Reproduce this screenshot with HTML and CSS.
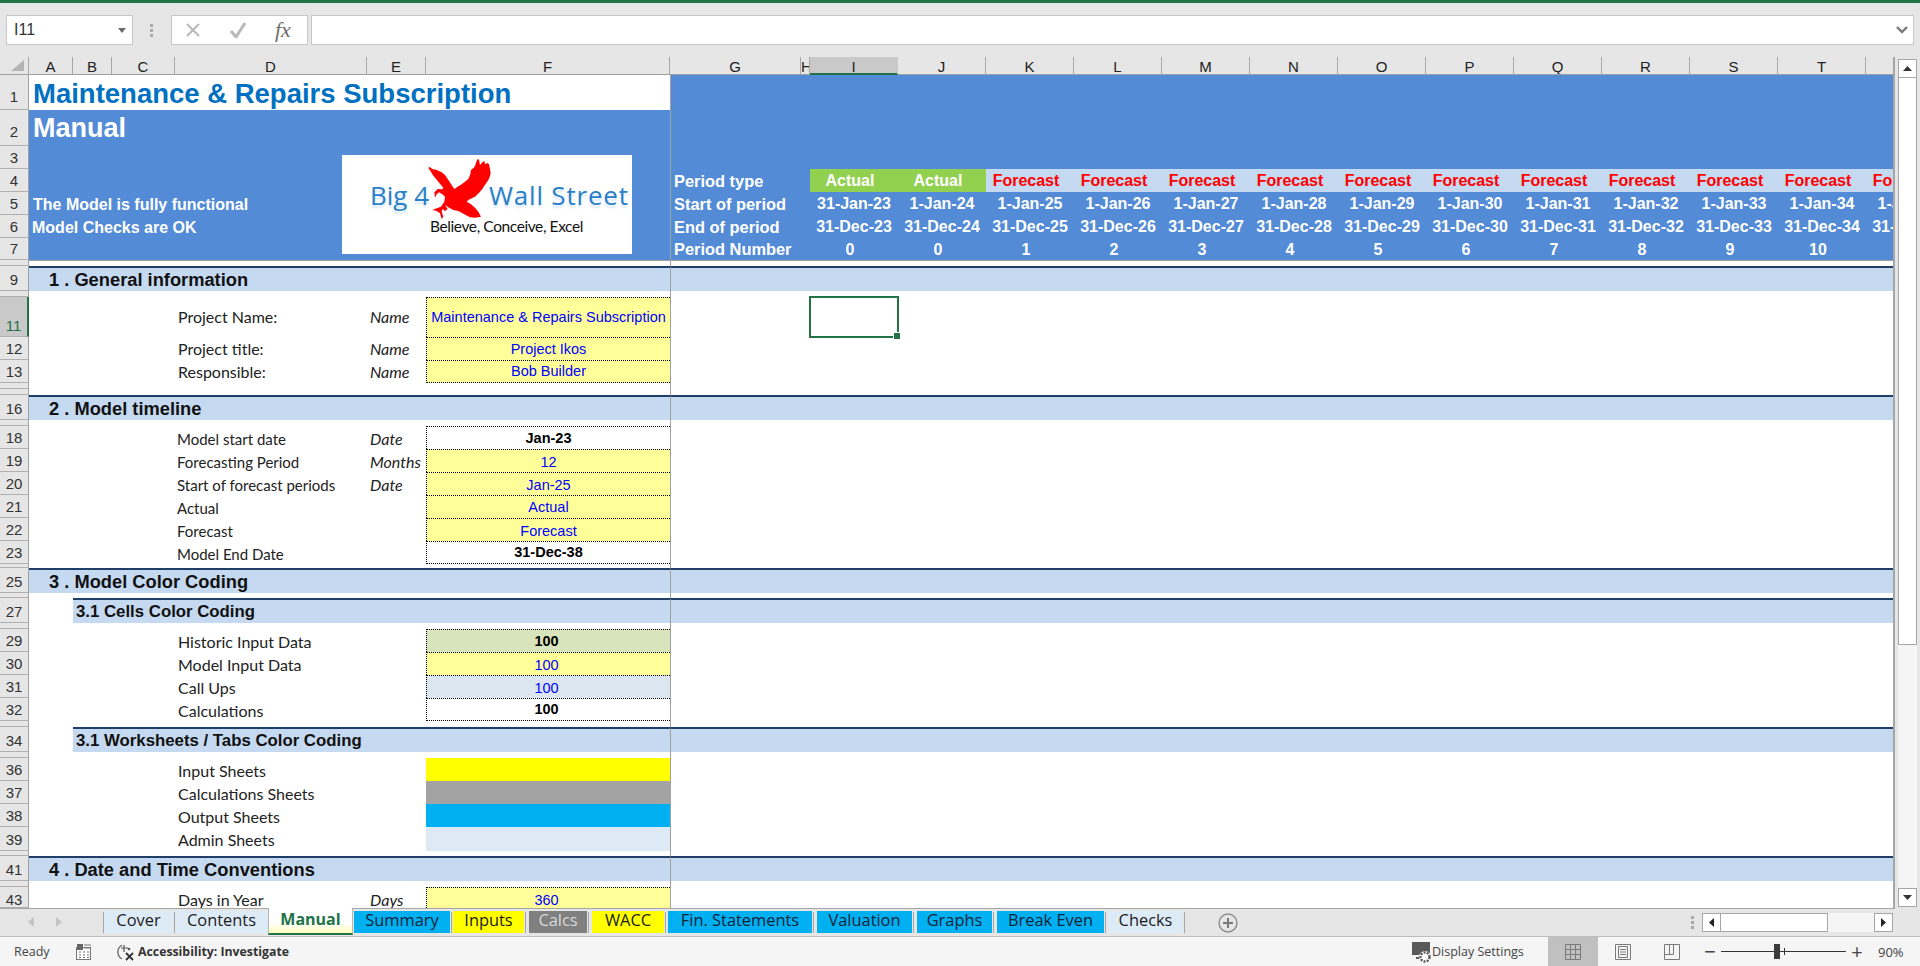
FILE: index.html
```html
<!DOCTYPE html>
<html lang="en">
<head>
<meta charset="utf-8">
<title>Manual</title>
<link rel="stylesheet" href="styles.css">
</head>
<body>
<div class="topline"></div>
<div class="fbar">
  <div class="namebox"><span>I11</span><svg class="caret" width="8" height="5" viewBox="0 0 8 5"><path d="M0 0h8L4 5z" fill="#6a6a6a"/></svg></div>
  <div class="grip"><i></i><i></i><i></i></div>
  <div class="fnbox">
    <svg width="16" height="16" viewBox="0 0 16 16"><path d="M2 2l12 12M14 2L2 14" stroke="#b9b9b9" stroke-width="2" fill="none"/></svg>
    <svg width="18" height="16" viewBox="0 0 18 16"><path d="M2 9l5 6L16 1" stroke="#b9b9b9" stroke-width="3" fill="none"/></svg>
    <span class="fx">fx</span>
  </div>
  <div class="finput"><svg width="12" height="8" viewBox="0 0 12 8"><path d="M1 1l5 5 5-5" stroke="#7a7a7a" stroke-width="2.4" fill="none"/></svg></div>
</div>
<div class="sheet">
  <div class="clip">
    <table class="grid">
      <colgroup>
        <col class="c-rh"><col class="c-a"><col class="c-b"><col class="c-c"><col class="c-d"><col class="c-e"><col class="c-f"><col class="c-g"><col class="c-h">
        <col class="c-p"><col class="c-p"><col class="c-p"><col class="c-p"><col class="c-p"><col class="c-p"><col class="c-p"><col class="c-p"><col class="c-p"><col class="c-p"><col class="c-p"><col class="c-p"><col class="c-p">
      </colgroup>
      <tr class="head">
        <th class="corner"><div class="ch"><svg width="13" height="11" viewBox="0 0 13 11"><path d="M13 0v11H0z" fill="#b4b4b4"/></svg></div></th>
        <th><div class="ch">A</div></th><th><div class="ch">B</div></th><th><div class="ch">C</div></th><th><div class="ch">D</div></th><th><div class="ch">E</div></th><th><div class="ch">F</div></th><th><div class="ch">G</div></th><th><div class="ch chh">H</div></th>
        <th><div class="ch chsel">I</div></th><th><div class="ch">J</div></th><th><div class="ch">K</div></th><th><div class="ch">L</div></th><th><div class="ch">M</div></th><th><div class="ch">N</div></th><th><div class="ch">O</div></th><th><div class="ch">P</div></th><th><div class="ch">Q</div></th><th><div class="ch">R</div></th><th><div class="ch">S</div></th><th><div class="ch">T</div></th><th><div class="ch">U</div></th>
      </tr>
      <tr><th><div class="rh h35">1</div></th><td colspan="6" class="title">Maintenance &amp; Repairs Subscription</td><td colspan="15" class="blue pane"></td></tr>
      <tr><th><div class="rh h36">2</div></th><td colspan="6" class="blue sub">Manual</td><td colspan="15" class="blue pane"></td></tr>
      <tr><th><div class="rh h23">3</div></th><td colspan="6" class="blue"></td><td colspan="15" class="blue pane"></td></tr>
      <tr class="per"><th><div class="rh h23">4</div></th><td colspan="6" class="blue"></td>
        <td colspan="2" class="blue pane plabel">Period type</td>
        <td class="actual sh">Actual</td><td class="actual sh">Actual</td>
        <td class="fc sh">Forecast</td><td class="fc sh">Forecast</td><td class="fc sh">Forecast</td><td class="fc sh">Forecast</td><td class="fc sh">Forecast</td><td class="fc sh">Forecast</td><td class="fc sh">Forecast</td><td class="fc sh">Forecast</td><td class="fc sh">Forecast</td><td class="fc sh">Forecast</td><td class="fc sh">Forecast</td></tr>
      <tr class="per"><th><div class="rh h23">5</div></th><td colspan="6" class="blue status-l">The Model is fully functional</td>
        <td colspan="2" class="blue pane plabel">Start of period</td>
        <td class="dt">31-Jan-23</td><td class="dt">1-Jan-24</td><td class="dt">1-Jan-25</td><td class="dt">1-Jan-26</td><td class="dt">1-Jan-27</td><td class="dt">1-Jan-28</td><td class="dt">1-Jan-29</td><td class="dt">1-Jan-30</td><td class="dt">1-Jan-31</td><td class="dt">1-Jan-32</td><td class="dt">1-Jan-33</td><td class="dt">1-Jan-34</td><td class="dt">1-Jan-35</td></tr>
      <tr class="per"><th><div class="rh h23">6</div></th><td colspan="6" class="blue status-l status-l2">Model Checks are OK</td>
        <td colspan="2" class="blue pane plabel">End of period</td>
        <td class="dt">31-Dec-23</td><td class="dt">31-Dec-24</td><td class="dt">31-Dec-25</td><td class="dt">31-Dec-26</td><td class="dt">31-Dec-27</td><td class="dt">31-Dec-28</td><td class="dt">31-Dec-29</td><td class="dt">31-Dec-30</td><td class="dt">31-Dec-31</td><td class="dt">31-Dec-32</td><td class="dt">31-Dec-33</td><td class="dt">31-Dec-34</td><td class="dt">31-Dec-35</td></tr>
      <tr class="per"><th><div class="rh h22">7</div></th><td colspan="6" class="blue"></td>
        <td colspan="2" class="blue pane plabel">Period Number</td>
        <td class="dt sh dn">0</td><td class="dt sh dn">0</td><td class="dt sh dn">1</td><td class="dt sh dn">2</td><td class="dt sh dn">3</td><td class="dt sh dn">4</td><td class="dt sh dn">5</td><td class="dt sh dn">6</td><td class="dt sh dn">7</td><td class="dt sh dn">8</td><td class="dt sh dn">9</td><td class="dt sh dn">10</td><td class="dt sh dn">11</td></tr>
      <tr><th><div class="rh h6"></div></th><td colspan="6" class="frz"></td><td colspan="15" class="frz pane"></td></tr>

      <tr><th><div class="rh h25">9</div></th><td colspan="6" class="sec"><span class="sec-t">1 . General information</span></td><td colspan="15" class="sec pane"></td></tr>
      <tr><th><div class="rh h6">10</div></th><td colspan="6"></td><td colspan="15" class="pane"></td></tr>
      <tr><th><div class="rh h40 rhsel">11</div></th><td colspan="3"></td><td class="lab mid">Project Name:</td><td class="unit mid">Name</td><td class="val inp dot">Maintenance &amp; Repairs Subscription</td>
        <td colspan="2" class="pane"></td><td class="sel"></td><td colspan="12"></td></tr>
      <tr><th><div class="rh h23">12</div></th><td colspan="3"></td><td class="lab up">Project title:</td><td class="unit up">Name</td><td class="val inp dot">Project Ikos</td><td colspan="15" class="pane"></td></tr>
      <tr><th><div class="rh h23">13</div></th><td colspan="3"></td><td class="lab up">Responsible:</td><td class="unit up">Name</td><td class="val inp dot end">Bob Builder</td><td colspan="15" class="pane"></td></tr>
      <tr><th><div class="rh h6">14</div></th><td colspan="6"></td><td colspan="15" class="pane"></td></tr>
      <tr><th><div class="rh h6">15</div></th><td colspan="6"></td><td colspan="15" class="pane"></td></tr>

      <tr><th><div class="rh h25">16</div></th><td colspan="6" class="sec"><span class="sec-t">2 . Model timeline</span></td><td colspan="15" class="sec pane"></td></tr>
      <tr><th><div class="rh h6">17</div></th><td colspan="6"></td><td colspan="15" class="pane"></td></tr>
      <tr><th><div class="rh h23">18</div></th><td colspan="3"></td><td class="lab lab2">Model start date</td><td class="unit">Date</td><td class="val calc dot">Jan-23</td><td colspan="15" class="pane"></td></tr>
      <tr><th><div class="rh h23">19</div></th><td colspan="3"></td><td class="lab lab2">Forecasting Period</td><td class="unit">Months</td><td class="val inp dot dn">12</td><td colspan="15" class="pane"></td></tr>
      <tr><th><div class="rh h23">20</div></th><td colspan="3"></td><td class="lab lab2">Start of forecast periods</td><td class="unit">Date</td><td class="val inp dot dn">Jan-25</td><td colspan="15" class="pane"></td></tr>
      <tr><th><div class="rh h23">21</div></th><td colspan="3"></td><td class="lab lab2">Actual</td><td></td><td class="val inp dot">Actual</td><td colspan="15" class="pane"></td></tr>
      <tr><th><div class="rh h23">22</div></th><td colspan="3"></td><td class="lab lab2">Forecast</td><td></td><td class="val inp dot dn">Forecast</td><td colspan="15" class="pane"></td></tr>
      <tr><th><div class="rh h23">23</div></th><td colspan="3"></td><td class="lab lab2">Model End Date</td><td></td><td class="val calc dot end">31-Dec-38</td><td colspan="15" class="pane"></td></tr>
      <tr><th><div class="rh h4"></div></th><td colspan="6"></td><td colspan="15" class="pane"></td></tr>

      <tr><th><div class="rh h25">25</div></th><td colspan="6" class="sec"><span class="sec-t">3 . Model Color Coding</span></td><td colspan="15" class="sec pane"></td></tr>
      <tr><th><div class="rh h5"></div></th><td colspan="6"></td><td colspan="15" class="pane"></td></tr>
      <tr><th><div class="rh h25">27</div></th><td></td><td colspan="5" class="sec sub-sec"><span class="sub-t">3.1 Cells Color Coding</span></td><td colspan="15" class="sec pane"></td></tr>
      <tr><th><div class="rh h6">28</div></th><td colspan="6"></td><td colspan="15" class="pane"></td></tr>
      <tr><th><div class="rh h23">29</div></th><td colspan="3"></td><td class="lab">Historic Input Data</td><td></td><td class="val hist calc dot off">100</td><td colspan="15" class="pane"></td></tr>
      <tr><th><div class="rh h23">30</div></th><td colspan="3"></td><td class="lab">Model Input Data</td><td></td><td class="val inp dot off dn">100</td><td colspan="15" class="pane"></td></tr>
      <tr><th><div class="rh h23">31</div></th><td colspan="3"></td><td class="lab">Call Ups</td><td></td><td class="val callup dot off dn">100</td><td colspan="15" class="pane"></td></tr>
      <tr><th><div class="rh h23">32</div></th><td colspan="3"></td><td class="lab">Calculations</td><td></td><td class="val calc dot end off">100</td><td colspan="15" class="pane"></td></tr>
      <tr><th><div class="rh h6"></div></th><td colspan="6"></td><td colspan="15" class="pane"></td></tr>
      <tr><th><div class="rh h25">34</div></th><td></td><td colspan="5" class="sec sub-sec"><span class="sub-t">3.1 Worksheets / Tabs Color Coding</span></td><td colspan="15" class="sec pane"></td></tr>
      <tr><th><div class="rh h6">35</div></th><td colspan="6"></td><td colspan="15" class="pane"></td></tr>
      <tr><th><div class="rh h23">36</div></th><td colspan="3"></td><td class="lab">Input Sheets</td><td></td><td class="sw-input"></td><td colspan="15" class="pane"></td></tr>
      <tr><th><div class="rh h23">37</div></th><td colspan="3"></td><td class="lab">Calculations Sheets</td><td></td><td class="sw-calc"></td><td colspan="15" class="pane"></td></tr>
      <tr><th><div class="rh h23">38</div></th><td colspan="3"></td><td class="lab">Output Sheets</td><td></td><td class="sw-output"></td><td colspan="15" class="pane"></td></tr>
      <tr><th><div class="rh h24">39</div></th><td colspan="3"></td><td class="lab up">Admin Sheets</td><td></td><td class="sw-admin"></td><td colspan="15" class="pane"></td></tr>
      <tr><th><div class="rh h5"></div></th><td colspan="6"></td><td colspan="15" class="pane"></td></tr>

      <tr><th><div class="rh h25">41</div></th><td colspan="6" class="sec"><span class="sec-t">4 . Date and Time Conventions</span></td><td colspan="15" class="sec pane"></td></tr>
      <tr><th><div class="rh h6">42</div></th><td colspan="6"></td><td colspan="15" class="pane"></td></tr>
      <tr><th><div class="rh h21 rh-last">43</div></th><td colspan="3"></td><td class="lab last">Days in Year</td><td class="unit last">Days</td><td class="val inp dot off last">360</td><td colspan="15" class="pane"></td></tr>
    </table>
    <div class="logo">
      <div class="logo-top"><span class="lg-a">Big 4</span><span class="lg-b">Wall Street</span></div>
      <div class="logo-tag">Believe, Conceive, Excel</div>
      <svg class="eagle" width="70" height="70" viewBox="0 0 210 210"><path fill="#f00" d="M10 38L14 36L22 42L34 44L50 52L60 60L70 75L80 90L88 102L100 94L110 88L120 80L130 72L136 58L138 45L146 38L150 33L154 20L158 12L162 14L165 30L172 22L178 18L181 28L188 24L192 28L195 42L197 55L194 66L190 75L184 84L178 92L172 102L165 110L158 118L150 125L140 130L130 135L125 140L138 148L150 158L160 170L168 185L150 188L135 187L118 178L100 168L85 165L70 157L60 150L68 162L60 168L52 162L50 170L55 185L50 192L45 175L35 168L22 165L35 160L48 155L58 140L60 125L52 118L42 112L35 118L30 128L28 112L38 102L52 103L55 98L40 80L25 62z"/></svg>
    </div>
  </div>
  <div class="vscroll">
    <div class="sbtn"><svg width="9" height="5" viewBox="0 0 9 5"><path d="M4.500 0L9 5H0z" fill="#333"/></svg></div>
    <div class="vthumb"></div>
    <div class="vtrack"></div>
    <div class="sbtn"><svg width="9" height="5" viewBox="0 0 9 5"><path d="M0 0h9L4.500 5z" fill="#333"/></svg></div>
  </div>
</div>
<div class="tabbar">
  <div class="nav">
    <svg width="6" height="10" viewBox="0 0 6 10"><path d="M6 0v10L0 5z" fill="#c4c4c4"/></svg>
    <svg width="6" height="10" viewBox="0 0 6 10"><path d="M0 0v10l6-5z" fill="#c4c4c4"/></svg>
  </div>
  <div class="tab t-cover admin">Cover</div>
  <div class="tab t-contents admin">Contents</div>
  <div class="tab t-manual">Manual</div>
  <div class="tab t-summary output">Summary</div>
  <div class="tab t-inputs input">Inputs</div>
  <div class="tab t-calcs calc-tab">Calcs</div>
  <div class="tab t-wacc input">WACC</div>
  <div class="tab t-fin output">Fin. Statements</div>
  <div class="tab t-val output">Valuation</div>
  <div class="tab t-graphs output">Graphs</div>
  <div class="tab t-break output">Break Even</div>
  <div class="tab t-checks admin">Checks</div>
  <svg class="add" width="20" height="20" viewBox="0 0 20 20"><circle cx="10" cy="10" r="9" fill="none" stroke="#8c8c8c" stroke-width="1.4"/><path d="M10 5v10M5 10h10" stroke="#7a7a7a" stroke-width="2"/></svg>
  <div class="hscroll">
    <div class="grip hgrip"><i></i><i></i><i></i></div>
    <div class="hbtn"><svg width="5" height="9" viewBox="0 0 5 9"><path d="M5 0v9L0 4.500z" fill="#222"/></svg></div>
    <div class="hthumb"></div>
    <div class="htrack"></div>
    <div class="hbtn"><svg width="5" height="9" viewBox="0 0 5 9"><path d="M0 0v9l5-4.500z" fill="#222"/></svg></div>
  </div>
</div>
<div class="status">
  <span class="ready">Ready</span>
  <svg class="macro" width="16" height="16" viewBox="0 0 16 16"><rect x=".5" y="3.500" width="14" height="12" fill="#fff" stroke="#777"/><rect x="1" y="0" width="6" height="6" fill="#666"/><path d="M8 1h7M8 4h7" stroke="#777"/><path d="M3 8h2M7 8h2M11 8h2M3 11h2M7 11h2M11 11h2M3 13.500h2M7 13.500h2M11 13.500h2" stroke="#777"/></svg>
  <svg class="access" width="20" height="20" viewBox="0 0 20 20"><path d="M7 3a8 8 0 0 0 0 14" fill="none" stroke="#666" stroke-width="1.3"/><path d="M9 3v7M6 6h7" stroke="#555" stroke-width="1.2"/><path d="M11 11l7 7M18 11l-7 7" stroke="#333" stroke-width="1.8"/><circle cx="14" cy="7" r="1.300" fill="#555"/></svg>
  <span class="acc-t">Accessibility: Investigate</span>
  <div class="st-right">
    <svg class="disp" width="20" height="22" viewBox="0 0 20 22"><path d="M0 0h18v13H0z" fill="#5a5a5a"/><path d="M4 15h5v2H4z" fill="#5a5a5a"/><circle cx="13" cy="15" r="6" fill="#fff"/><circle cx="13" cy="15" r="4.500" fill="none" stroke="#5a5a5a" stroke-width="2.400" stroke-dasharray="2 1.200"/></svg>
    <span class="disp-t">Display Settings</span>
    <div class="view on"><svg width="16" height="16" viewBox="0 0 16 16"><path d="M.5.500h15v15H.5zM.5 5.500h15M.5 10.500h15M5.500.500v15M10.500.500v15" fill="none" stroke="#7a7a7a"/></svg></div>
    <div class="view"><svg width="16" height="16" viewBox="0 0 16 16"><path d="M.5.500h15v15H.5z" fill="none" stroke="#7a7a7a"/><path d="M3.500 2.500h9v11h-9zM5 5.500h6M5 8h6M5 10.500h6" fill="none" stroke="#7a7a7a"/></svg></div>
    <div class="view"><svg width="16" height="16" viewBox="0 0 16 16"><path d="M.5.500h15v15H.5zM.5 10.500h9V.500" fill="none" stroke="#7a7a7a"/><path d="M5.500.500v10" stroke="#7a7a7a"/></svg></div>
    <div class="zoomctl">
      <span class="zm">−</span>
      <div class="slider"><i class="tick"></i><i class="knob"></i></div>
      <span class="zm">+</span>
    </div>
    <span class="pct">90%</span>
  </div>
</div>
</body>
</html>
```

FILE: styles.css
```css
* { box-sizing: border-box; }
html, body { margin: 0; padding: 0; }
body {
  width: 1920px; height: 966px; overflow: hidden;
  display: flex; flex-direction: column;
  background: #e6e6e6;
  font-family: "Liberation Sans", Arial, sans-serif;
  color: #000;
}
.topline { height: 3px; background: #217346; flex: none; }

/* formula bar */
.fbar { height: 54px; flex: none; display: flex; align-items: flex-start; padding: 12px 6px 0 6px; }
.namebox {
  width: 127px; height: 30px; background: #fff; border: 1px solid #c6c6c6;
  display: flex; align-items: center; justify-content: space-between; padding: 0 6px 0 7px;
  font-size: 16px; color: #333;
}
.grip { width: 38px; height: 30px; display: flex; flex-direction: column; align-items: center; justify-content: center; gap: 2px; }
.grip i { width: 3px; height: 3px; background: #aaa; display: block; }
.fnbox {
  width: 137px; height: 30px; background: #fff; border: 1px solid #c6c6c6;
  display: flex; align-items: center; gap: 28px; padding-left: 13px;
}
.fx { font-family: "Liberation Serif", serif; font-style: italic; font-size: 22px; color: #6e6e6e; margin-left: 0; }
.finput {
  margin-left: 3px; width: 1604px; height: 30px; background: #fff; border: 1px solid #c6c6c6;
  display: flex; align-items: center; justify-content: flex-end; padding-right: 5px;
}

/* sheet */
.sheet { height: 851px; flex: none; display: flex; }
.clip { width: 1895px; height: 852px; overflow: hidden; position: relative; border-right: 2px solid #a6a6a6; border-bottom: 1px solid #a6a6a6; background: #fff; flex: none; }
.grid { border-collapse: separate; border-spacing: 0; table-layout: fixed; width: 1954px; }
.grid th, .grid td { padding: 0; white-space: nowrap; line-height: 1; }
.grid th { font-weight: normal; }
.c-rh { width: 29px; } .c-a { width: 44px; } .c-b { width: 39px; } .c-c { width: 63px; } .c-d { width: 192px; }
.c-e { width: 59px; } .c-f { width: 244px; } .c-g { width: 131px; } .c-h { width: 9px; } .c-p { width: 88px; }

.ch {
  height: 18px; background: #e6e6e6; border-right: 1px solid #a8a8a8; border-bottom: 1px solid #a0a0a0;
  font-size: 15px; color: #222; text-align: center; line-height: 19px; overflow: hidden;
}
.corner .ch { display: flex; justify-content: flex-end; align-items: flex-end; padding: 0 4px 3px 0; }
.chh { text-align: left; }
.chsel { background: #c9c9c9; border-bottom: 2px solid #217346; border-right-color: #c9c9c9; }

.rh {
  width: 29px; background: #e6e6e6; border-bottom: 1px solid #b0b0b0; border-right: 1px solid #a0a0a0;
  display: flex; align-items: flex-end; justify-content: center; overflow: hidden;
  font-size: 15px; color: #333; line-height: 20px;
}
.rhsel { background: #c9c9c9; border-right: 2px solid #217346; color: #217346; }
.h4 { height: 4px; } .h5 { height: 5px; } .h6 { height: 6px; } .h21 { height: 21px; } .h22 { height: 22px; }
.h23 { height: 23px; } .h24 { height: 24px; } .h25 { height: 25px; } .h40 { height: 40px; }
.h35 { height: 35px; line-height: 24px; } .h36 { height: 36px; line-height: 26px; }
.rh-last { line-height: 14px; }

.pane { border-left: 1px solid #a0a0a0; }
.blue { background: #538bd6; color: #fff; }
.grid .title { background: #fff; color: #0070c0; font-weight: bold; font-size: 27.500px; padding-left: 4px; padding-top: 2px; }
.grid .sub { font-weight: bold; font-size: 27px; padding-left: 4px; }

.per td { font-size: 16px; font-weight: bold; text-align: center; }
.grid .plabel { text-align: left; padding-left: 3px; padding-top: 1px; font-size: 16.400px; }
.grid .status-l { text-align: left; font-size: 16px; padding-left: 4px; padding-top: 2px; }
.grid .status-l2 { padding-left: 3px; }
.frz { border-top: 1px solid #a0a0a0; }
.actual { background: #92d050; color: #fff; }
.fc { background: #c5d9f1; color: #f00; }
.dt { background: #538bd6; color: #fff; }
.grid .sh { padding-right: 8px; }
.grid .dn { padding-top: 2px; }

.grid .sec { background: #c5d9f1; border-top: 2px solid #1f3f66; vertical-align: middle; padding-top: 1px; }
.sec-t { font-weight: bold; font-size: 18.300px; padding-left: 20px; color: #111; }
.sub-t { font-weight: bold; font-size: 16.800px; padding-left: 3px; color: #111; }

.grid .lab { font-family: Lato, "Liberation Sans", sans-serif; font-size: 16px; padding-left: 3px; color: #222; vertical-align: bottom; padding-bottom: 2px; }
.grid .lab2 { font-size: 15px; padding-left: 2px; }
.grid .unit { font-family: Lato, "Liberation Sans", sans-serif; font-style: italic; font-size: 16px; padding-left: 3px; color: #222; vertical-align: bottom; padding-bottom: 2px; }
.grid .up { padding-bottom: 3px; }
.grid .mid { vertical-align: middle; padding-bottom: 0; }
.grid .last { vertical-align: top; padding-top: 5px; padding-bottom: 0; }
.val { text-align: center; font-size: 14.500px; }
.dot { border-top: 1px dotted #000; border-left: 1px dotted #000; }
.end { border-bottom: 1px dotted #000; }
.inp { background: #ff9; color: #00f; }
.calc { font-weight: bold; color: #000; }
.hist { background: #d8e4bc; }
.callup { background: #dce6f1; color: #00f; }
.grid .off { padding-right: 4px; }
.sw-input { background: #ff0; } .sw-calc { background: #a3a3a3; } .sw-output { background: #00b0f0; } .sw-admin { background: #dde9f5; }
.sel { position: relative; outline: 2px solid #217346; outline-offset: -1px; }
.sel::after { content: ""; position: absolute; right: -3px; bottom: -3px; width: 6px; height: 6px; background: #217346; border: 1px solid #fff; }

/* logo floats above the sheet */
.logo {
  position: absolute; left: 342px; top: 98px; width: 290px; height: 99px; background: #fff;
  display: flex; flex-direction: column;
  padding-top: 25px;
}
.logo-top { display: flex; padding-left: 28px; font-family: "Open Sans", sans-serif; font-size: 26px; line-height: 30px; color: #2a7fc9; text-shadow: 0 3px 2px rgba(42,127,201,.18); }
.lg-a { width: 119px; flex: none; }
.lg-b { letter-spacing: .8px; }
.logo-tag { font-family: Lato, sans-serif; font-size: 15.500px; letter-spacing: -.4px; line-height: 18px; color: #111; margin-left: 88px; margin-top: 7px; }
.eagle { position: absolute; left: 83px; top: 0; }

/* vertical scrollbar */
.vscroll { width: 25px; padding: 2px 3px 1px 3px; display: flex; flex-direction: column; }
.sbtn { height: 19px; flex: none; background: #fff; border: 1px solid #a6a6a6; display: flex; align-items: center; justify-content: center; }
.vthumb { height: 567px; background: #fff; border: 1px solid #a6a6a6; border-top: 0; flex: none; }
.vtrack { flex: 1; background: #f5f5f5; }

/* tabs */
.tabbar { height: 29px; flex: none; display: flex; align-items: flex-start; border-bottom: 1px solid #bdbdbd; position: relative; font-family: "Open Sans", sans-serif; }
.nav { width: 104px; height: 28px; display: flex; align-items: center; gap: 22px; padding-left: 28px; flex: none; }
.tab { height: 22px; margin-top: 3px; font-size: 16.400px; line-height: 17px; text-align: center; position: relative; color: #1c1c1c; flex: none; }
.tab::after { content: ""; position: absolute; right: -2px; top: 1px; width: 1px; height: 21px; background: #a6a6a6; }
.admin { background: #ddebf7; }
.output { background: #00b0f0; color: #10243a; }
.input { background: #ff0; }
.calc-tab { background: #808080; color: #d9d9d9; }
.t-cover { width: 69px; margin-right: 2px; }
.t-cover::before { content: ""; position: absolute; left: -1px; top: 1px; width: 1px; height: 21px; background: #a6a6a6; }
.t-contents { width: 93px; }
.t-manual { width: 85px; margin-right: 1px; margin-top: 0; height: 27px; font-size: 16px; background: linear-gradient(#fff 60%, #ffffc4 92%); border: 1px solid #b5b5b5; border-top: 0; border-bottom: 2px solid #217346; color: #217346; font-weight: bold; line-height: 23px; }
.t-manual::after { display: none; }
.t-summary { width: 96px; margin-right: 3px; }
.t-inputs { width: 71px; margin-right: 5px; }
.t-calcs { width: 58px; margin-right: 5px; }
.t-wacc { width: 72px; margin-right: 4px; }
.t-fin { width: 144px; margin-right: 5px; }
.t-val { width: 95px; margin-right: 5px; }
.t-graphs { width: 75px; margin-right: 5px; }
.t-break { width: 107px; margin-right: 4px; }
.t-checks { width: 75px; }
.add { margin: 5px 0 0 35px; flex: none; }
.hscroll { margin-left: auto; margin-top: 5px; margin-right: 27px; display: flex; height: 19px; align-items: stretch; }
.hgrip { width: 20px; height: 19px; }
.hbtn { width: 19px; background: #fff; border: 1px solid #a6a6a6; display: flex; align-items: center; justify-content: center; }
.hthumb { width: 107px; background: #fff; border: 1px solid #a6a6a6; border-left: 0; }
.htrack { width: 46px; background: #f5f5f5; }

/* status */
.status { height: 29px; flex: none; background: #f5f5f5; display: flex; align-items: center; font-family: "Open Sans", sans-serif; font-size: 12.500px; color: #444; }
.ready { margin-left: 14px; width: 62px; }
.macro { flex: none; }
.access { flex: none; margin-left: 23px; }
.acc-t { margin-left: 3px; font-weight: bold; font-size: 12.300px; color: #333; }
.st-right { margin-left: auto; display: flex; align-items: center; height: 29px; }
.disp { flex: none; margin-top: 2px; }
.disp-t { width: 116px; font-size: 12.500px; color: #444; }
.view { width: 49px; height: 29px; display: flex; align-items: center; justify-content: center; }
.view.on { background: #c0c0c0; width: 50px; }
.zoomctl { margin-left: 6px; display: flex; align-items: center; width: 163px; flex: none; }
.zm { font-size: 20px; color: #444; width: 16px; text-align: center; line-height: 20px; flex: none; }
.slider { width: 125px; height: 1px; background: #333; position: relative; margin: 0 3px; flex: none; }
.tick { position: absolute; left: 63px; top: -3px; width: 1px; height: 7px; background: #333; }
.knob { position: absolute; left: 53px; top: -7px; width: 6px; height: 15px; background: #3c3c3c; }
.pct { width: 55px; padding-left: 13px; font-size: 13px; color: #444; flex: none; }
```
